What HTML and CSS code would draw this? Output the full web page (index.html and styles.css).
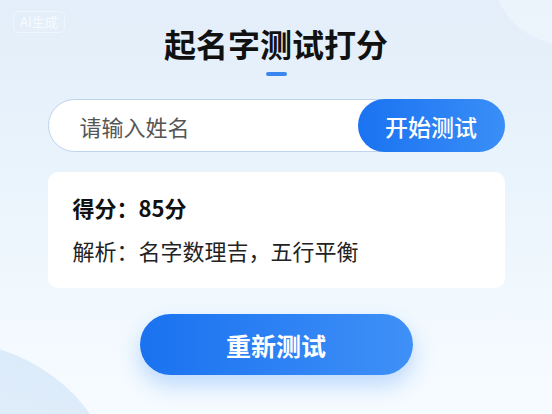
FILE: index.html
```html
<!DOCTYPE html>
<html lang="zh-CN">
<head>
<meta charset="utf-8">
<link rel="stylesheet" href="styles.css">
</head>
<body>
<div class="page">
  <div class="blob blob-tr"></div>
  <div class="blob blob-bl"></div>
  <div class="badge">AI生成</div>
  <main class="content">
    <h1 class="title">起名字测试打分</h1>
    <div class="title-bar"></div>
    <div class="search">
      <input class="search-input" type="text" placeholder="请输入姓名">
      <button class="search-btn">开始测试</button>
    </div>
    <section class="card">
      <p class="score">得分：85分</p>
      <p class="analysis">解析：名字数理吉，五行平衡</p>
    </section>
    <button class="retry">重新测试</button>
  </main>
</div>
</body>
</html>
```
FILE: styles.css
```css
* { box-sizing: border-box; }
html, body { margin: 0; padding: 0; }
body {
  width: 552px;
  height: 414px;
  overflow: hidden;
  font-family: "Noto Sans CJK SC", "Noto Sans", sans-serif;
}
.page {
  position: relative;
  width: 552px;
  height: 414px;
  overflow: hidden;
  background: linear-gradient(180deg, #e3eefa 0%, #eaf4fc 45%, #f2f9fe 75%, #f6fbff 100%);
}
.blob {
  position: absolute;
  border-radius: 50%;
  pointer-events: none;
}
.blob-tr {
  width: 150px;
  height: 150px;
  right: -90px;
  top: -105px;
  background: rgba(255, 255, 255, 0.3);
}
.blob-bl {
  width: 300px;
  height: 220px;
  left: -190px;
  top: 342px;
  background: linear-gradient(180deg, #dcebfa, #e8f2fb);
  transform: rotate(15deg);
}
.badge {
  position: absolute;
  left: 13px;
  top: 11px;
  padding: 0 6px;
  font-size: 13px;
  color: rgba(255, 255, 255, 0.75);
  border: 1px solid rgba(255, 255, 255, 0.4);
  border-radius: 5px;
  line-height: 20px;
}
.content {
  position: relative;
  display: flex;
  flex-direction: column;
  align-items: center;
  padding-top: 21px;
}
.title {
  margin: 0;
  font-size: 32px;
  line-height: 44px;
  font-weight: 700;
  color: #111;
}
.title-bar {
  width: 21px;
  height: 4px;
  margin-top: 7px;
  border-radius: 2px;
  background: #3a86f0;
}
.search {
  margin-top: 23px;
  width: 457px;
  height: 53px;
  display: flex;
  background: #fff;
  border: 1px solid #bcd4ee;
  border-radius: 27px;
}
.search-input {
  flex: 1;
  min-width: 0;
  border: none;
  outline: none;
  background: transparent;
  padding: 0 0 0 31px;
  font-family: inherit;
  font-size: 22px;
  color: #333;
}
.search-input::placeholder { color: #555; }
.search-btn {
  width: 147px;
  height: 53px;
  margin: -1px -1px -1px 0;
  border: none;
  border-radius: 27px;
  background: linear-gradient(90deg, #1a73f1, #3a8ef7);
  color: #fff;
  font-family: inherit;
  font-size: 23px;
  font-weight: 500;
  padding: 0;
}
.card {
  margin-top: 20px;
  width: 457px;
  height: 116px;
  background: #fff;
  border-radius: 10px;
  padding: 19px 25px 0;
}
.score {
  margin: 0;
  font-size: 22px;
  line-height: 32px;
  font-weight: 700;
  color: #111;
}
.analysis {
  margin: 11px 0 0;
  font-size: 22px;
  line-height: 32px;
  color: #222;
}
.retry {
  margin-top: 26px;
  width: 273px;
  height: 61px;
  border: none;
  border-radius: 31px;
  background: linear-gradient(90deg, #1a72f0, #3f90f7);
  color: #fff;
  font-family: inherit;
  font-size: 25px;
  font-weight: 700;
  box-shadow: 0 10px 22px rgba(40, 130, 245, 0.28);
  padding: 0;
}
```
